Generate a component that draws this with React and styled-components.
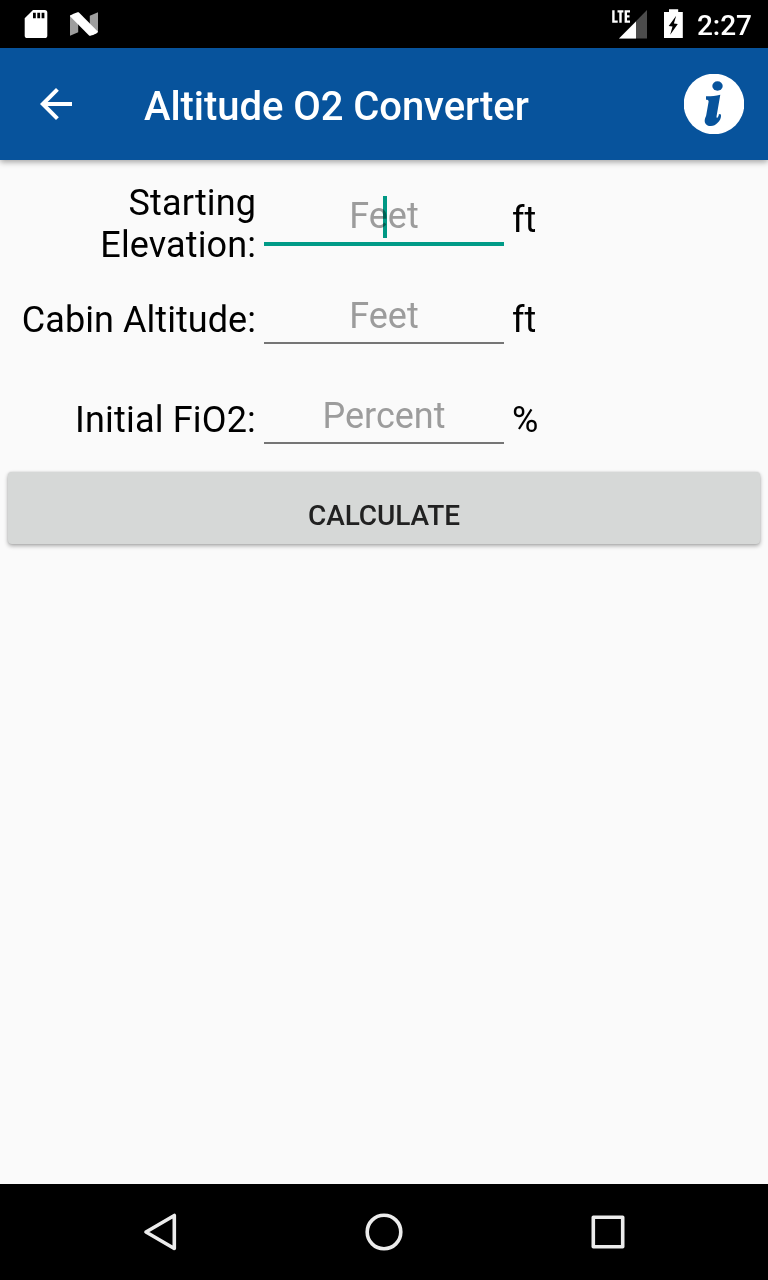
import React from "react";
import styled, { createGlobalStyle } from "styled-components";

const GlobalStyle = createGlobalStyle`
  * { box-sizing: border-box; }
  body { margin: 0; background: #fafafa; font-family: Roboto, sans-serif; }
`;

const Screen = styled.div`
  display: flex;
  flex-direction: column;
  width: 768px;
  height: 1280px;
  background: #fafafa;
  color: #000;
`;

const StatusBar = styled.header`
  display: flex;
  align-items: center;
  justify-content: space-between;
  height: 48px;
  flex: none;
  padding: 0 16px 0 24px;
  background: #000;
`;

const StatusGroup = styled.div`
  display: flex;
  align-items: center;
  height: 48px;
  gap: ${({ $gap }) => $gap}px;
`;

const Clock = styled.time`
  margin-left: -3px;
  padding-top: 3px;
  color: #fff;
  font-size: 28px;
  font-weight: 500;
  line-height: 33px;
`;

const AppBar = styled.div`
  display: flex;
  align-items: center;
  height: 112px;
  flex: none;
  padding: 0 24px 0 40px;
  background: #07539c;
  box-shadow: 0 2px 6px rgba(0, 0, 0, 0.36);
`;

const IconButton = styled.button`
  display: flex;
  padding: 0;
  border: 0;
  background: none;
`;

const Title = styled.h1`
  flex: 1;
  margin: 6px 0 0 72px;
  color: #fff;
  font-size: 40px;
  font-weight: 500;
  letter-spacing: -0.06px;
  line-height: 48px;
  white-space: nowrap;
`;

const Form = styled.form`
  flex: 1;
  padding: 10px 8px 0;
`;

const Field = styled.div`
  display: grid;
  grid-template-columns: 248px 256px 1fr;
  align-items: start;
  height: 100px;
  font-size: 36px;
  line-height: 42px;
`;

const Label = styled.label`
  padding-top: ${({ $twoLines }) => ($twoLines ? 12 : 29)}px;
  letter-spacing: ${({ $tracking }) => $tracking}px;
  text-align: right;
`;

const InputWrap = styled.div`
  position: relative;
  height: ${({ $focused }) => ($focused ? 76 : 74)}px;
  margin: 0 8px;
  padding-top: 25px;
  border-bottom: ${({ $focused }) => ($focused ? "4px solid #009b87" : "2px solid #757575")};
`;

const Input = styled.input`
  display: block;
  width: 100%;
  height: 42px;
  padding: 0;
  border: 0;
  outline: 0;
  background: none;
  font: 36px/42px Roboto, sans-serif;
  text-align: center;
  &::placeholder { color: #9c9c9c; opacity: 1; }
`;

const Caret = styled.span`
  position: absolute;
  left: 119px;
  top: 26px;
  width: 4px;
  height: 42px;
  background: #009b87;
  mix-blend-mode: multiply;
`;

const Unit = styled.span`
  padding-top: 29px;
`;

const CalculateButton = styled.button`
  display: block;
  width: 100%;
  height: 72px;
  margin-top: 2px;
  padding: 14px 0 0;
  border: 0;
  border-radius: 4px;
  background: #d6d8d7;
  box-shadow: 0 2px 4px rgba(0, 0, 0, 0.32), 0 0 2px rgba(0, 0, 0, 0.14);
  color: #212121;
  font: 500 28px/33px Roboto, sans-serif;
  letter-spacing: -0.08px;
`;

const NavBar = styled.nav`
  display: flex;
  align-items: center;
  justify-content: center;
  gap: 176px;
  height: 96px;
  flex: none;
  background: #000;
`;

const SdCardIcon = () => (
  <svg width="24" height="48" viewBox="24 0 24 48">
    <path fill="#fff" d="M33 10h11.700a2.600 2.600 0 0 1 2.600 2.600v22.800a2.600 2.600 0 0 1-2.600 2.600H27.300a2.600 2.600 0 0 1-2.600-2.600V18.300Z" />
    <path d="M33 12.800h2.800v5.500H33ZM37.300 12.800h2.800v5.500h-2.800ZM41.600 12.800h2.800v5.500h-2.800Z" />
  </svg>
);

const NougatIcon = () => (
  <svg width="28" height="48" viewBox="70 0 28 48">
    <path fill="#9e9e9e" d="M70 15v20.700l8.200-3.400V15ZM98 12.300v20l-8.200-4V15.700Z" />
    <path fill="#fff" d="M70 16.200c0-1.400 7.400-4.400 8.700-4L98 31.800c0 1.500-7 4.300-8.700 4Z" />
  </svg>
);

const SignalIcon = () => (
  <svg width="36" height="48" viewBox="612 0 36 48">
    <path fill="#4c4c4c" d="M647 10v28.500H619Z" />
    <path fill="#fff" d="M636 21.400v17.100H619Z" />
    <path fill="none" stroke="#fff" strokeWidth="2.400" d="M613.400 10.200v11.400h4.300M617.500 11.400h5.900M620.500 11.400v11.400M630 11.400h-4.200v10.200h4.200M625.800 16.400h3.700" />
  </svg>
);

const BatteryIcon = () => (
  <svg width="20" height="48" viewBox="664 0 20 48">
    <path fill="#fff" d="M669 9.300h9.200V12h4.600v26H664V12h5Z" />
    <path d="m676.200 15.800-7.500 10.200 3.800.6-2.300 8.200 7.600-10.800-3.900-.6Z" />
  </svg>
);

const BackIcon = () => (
  <svg width="32" height="32" viewBox="4 4 16 16">
    <path fill="#fff" d="M20 11H7.830l5.590-5.590L12 4l-8 8 8 8 1.410-1.410L7.830 13H20v-2z" />
  </svg>
);

const InfoIcon = () => (
  <svg width="60" height="60" viewBox="684 74 60 60">
    <circle cx="714" cy="104" r="30.300" fill="#fff" />
    <ellipse cx="717.500" cy="86" rx="5.200" ry="4.700" fill="#07539c" />
    <path fill="#07539c" d="M706 96.200c4.800.1 9.400-.4 14.300-1.500l-3.700 21.300c-.3 1.800.4 2.200 1.200 1.200.7-.8 1-2 1.100-3.200l2.100.5c.3 3.500-1 6.500-3.600 8.600-2 1.800-3.600 2.900-6.500 2.900-4.200 0-6.800-2.600-6.100-6.600.3-1.700 1.300-3 1.500-4.600l2.300-13c.2-1.500-.6-2.100-2.600-2.100Z" />
  </svg>
);

const NavIcon = ({ children }) => (
  <svg width="48" height="48" viewBox="0 0 48 48" fill="none" stroke="#ececec" strokeWidth="3.600" strokeLinejoin="round">
    {children}
  </svg>
);

const fields = [
  { id: "elevation", lines: ["Starting", "Elevation:"], hint: "Feet", unit: "ft", focused: true, tracking: 0.12 },
  { id: "cabin", lines: ["Cabin Altitude:"], hint: "Feet", unit: "ft", tracking: 0.06 },
  { id: "fio2", lines: ["Initial FiO2:"], hint: "Percent", unit: "%", tracking: 0.18 },
];

export default function App() {
  return (
    <>
      <GlobalStyle />
      <Screen>
        <StatusBar>
          <StatusGroup $gap={22}>
            <SdCardIcon />
            <NougatIcon />
          </StatusGroup>
          <StatusGroup $gap={16}>
            <SignalIcon />
            <BatteryIcon />
            <Clock>2:27</Clock>
          </StatusGroup>
        </StatusBar>
        <AppBar>
          <IconButton aria-label="Back"><BackIcon /></IconButton>
          <Title>Altitude O2 Converter</Title>
          <IconButton aria-label="Information"><InfoIcon /></IconButton>
        </AppBar>
        <Form>
          {fields.map(({ id, lines, hint, unit, focused, tracking }) => (
            <Field key={id}>
              <Label htmlFor={id} $twoLines={lines.length > 1} $tracking={tracking}>
                {lines.map((line, i) => (
                  <React.Fragment key={line}>{i > 0 && <br />}{line}</React.Fragment>
                ))}
              </Label>
              <InputWrap $focused={focused}>
                <Input id={id} placeholder={hint} />
                {focused && <Caret />}
              </InputWrap>
              <Unit>{unit}</Unit>
            </Field>
          ))}
          <CalculateButton type="button">CALCULATE</CalculateButton>
        </Form>
        <NavBar>
          <IconButton aria-label="Navigate back">
            <NavIcon><path d="M38.300 7.500v33L10 24Z" /></NavIcon>
          </IconButton>
          <IconButton aria-label="Home">
            <NavIcon><circle cx="24" cy="24" r="16.800" /></NavIcon>
          </IconButton>
          <IconButton aria-label="Recent apps">
            <NavIcon><rect x="9.300" y="9.300" width="29.400" height="29.400" /></NavIcon>
          </IconButton>
        </NavBar>
      </Screen>
    </>
  );
}
